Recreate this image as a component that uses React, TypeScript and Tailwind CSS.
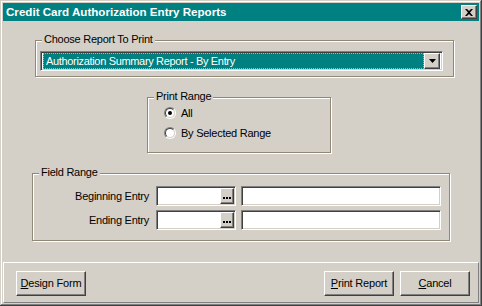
import React from "react";

const FONT = { fontFamily: '"Liberation Sans", Arial, sans-serif' };

const raised =
  "border border-t-white border-l-white border-r-[#404040] border-b-[#404040] shadow-[inset_-1px_-1px_0_#808080]";
const sunken =
  "border border-t-[#808080] border-l-[#808080] border-r-white border-b-white shadow-[inset_1px_1px_0_#404040,inset_-1px_-1px_0_#d4d0c8]";

function Group({ label, className, children }: { label: string; className: string; children: React.ReactNode }) {
  return (
    <div className={"relative border border-[#8f8877] shadow-[inset_1px_1px_0_#fff,1px_1px_0_#fff] " + className}>
      <span className="absolute left-[6px] top-[-8px] bg-[#d4d0c8] px-[2px] text-[11px] leading-[13px] tracking-[-0.25px] text-black">
        {label}
      </span>
      {children}
    </div>
  );
}

function Radio({ checked, label }: { checked?: boolean; label: string }) {
  return (
    <div className="flex h-[20px] items-center gap-[5px]">
      <div className="flex h-[12px] w-[12px] items-center justify-center rounded-full border border-t-[#808080] border-l-[#808080] border-r-white border-b-white">
        <div className="flex h-[10px] w-[10px] items-center justify-center rounded-full border border-t-[#404040] border-l-[#404040] border-r-[#d4d0c8] border-b-[#d4d0c8] bg-white">
          {checked && <div className="h-[4px] w-[4px] rounded-full bg-black" />}
        </div>
      </div>
      <span className="text-[11px] tracking-[-0.25px] text-black">{label}</span>
    </div>
  );
}

function FieldRow({ label }: { label: string }) {
  return (
    <div className="flex h-[20px] items-center">
      <span className="w-[116px] text-right text-[11px] tracking-[-0.25px] text-black">{label}</span>
      <div className={"ml-[7px] flex h-[20px] w-[80px] items-center justify-end bg-white pr-[1px] " + sunken}>
        <div className={"flex h-[16px] w-[14px] items-end justify-center bg-[#d4d0c8] pb-[4px] " + raised}>
          <div className="flex gap-[1px]">
            <div className="h-[2px] w-[2px] bg-black" />
            <div className="h-[2px] w-[2px] bg-black" />
            <div className="h-[2px] w-[2px] bg-black" />
          </div>
        </div>
      </div>
      <div className={"ml-[5px] h-[20px] w-[200px] bg-white " + sunken} />
    </div>
  );
}

function Button({ children, className = "" }: { children: React.ReactNode; className?: string }) {
  return (
    <button className={"flex h-[25px] w-[70px] items-center justify-center bg-[#d4d0c8] text-[11px] tracking-[-0.2px] text-black " + raised + " " + className}>
      {children}
    </button>
  );
}

export default function App() {
  return (
    <div
      style={FONT}
      className="flex h-[306px] w-[482px] flex-col bg-[#d4d0c8] p-[3px] shadow-[inset_-1px_-1px_0_#404040,inset_1px_1px_0_#d4d0c8,inset_-2px_-2px_0_#808080,inset_2px_2px_0_#fff]"
    >
      {/* title bar */}
      <div className="flex h-[18px] items-center justify-between bg-[#008080] pl-[3px] pr-[2px]">
        <span className="text-[11.6px] font-bold text-white">Credit Card Authorization Entry Reports</span>
        <div className={"flex h-[14px] w-[16px] items-center justify-center bg-[#d4d0c8] " + raised}>
          <svg width="8" height="7" viewBox="0 0 8 7">
            <path d="M0 0h2l2 2 2-2h2L5 3.5 8 7H6L4 5 2 7H0l3-3.5z" fill="#000" />
          </svg>
        </div>
      </div>

      <Group label="Choose Report To Print" className="ml-[32px] mt-[19px] h-[37px] w-[419px] pl-[4px] pt-[10px]">
        <div className={"flex h-[20px] w-[403px] items-center bg-white p-[2px] " + sunken}>
          <div className="flex h-[16px] flex-1 items-center border border-dotted border-[#ff9090] bg-[#008080] pl-[2px]">
            <span className="text-[11px] tracking-[-0.33px] text-white">Authorization Summary Report - By Entry</span>
          </div>
          <div className={"flex h-[16px] w-[16px] items-center justify-center bg-[#d4d0c8] " + raised}>
            <svg width="7" height="4" viewBox="0 0 7 4">
              <path d="M0 0h7L3.5 4z" fill="#000" />
            </svg>
          </div>
        </div>
      </Group>

      <Group label="Print Range" className="ml-[144px] mt-[20px] flex h-[56px] w-[184px] flex-col pl-[16px] pt-[5px]">
        <Radio checked label="All" />
        <Radio label="By Selected Range" />
      </Group>

      <Group label="Field Range" className="ml-[29px] mt-[20px] flex h-[68px] w-[418px] flex-col gap-[4px] pt-[12px]">
        <FieldRow label="Beginning Entry" />
        <FieldRow label="Ending Entry" />
      </Group>

      <div className="mt-[21px] flex h-[41px] items-start border border-t-white border-l-white border-r-[#808080] border-b-[#808080] pl-[12px] pr-[8px] pt-[8px]">
        <Button>
          <span><u>D</u>esign Form</span>
        </Button>
        <div className="flex-1" />
        <Button>
          <span><u>P</u>rint Report</span>
        </Button>
        <Button className="ml-[6px]">
          <span><u>C</u>ancel</span>
        </Button>
      </div>
    </div>
  );
}
